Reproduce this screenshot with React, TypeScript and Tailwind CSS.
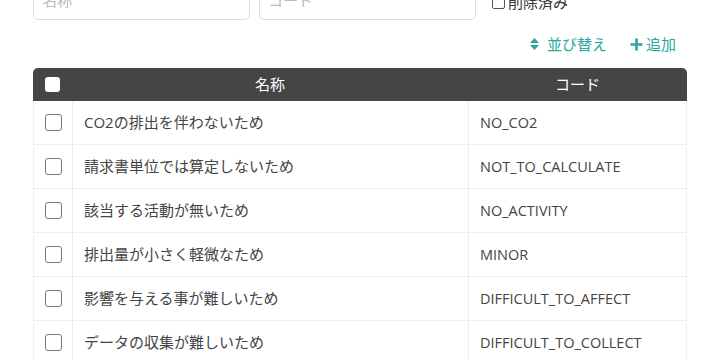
import React from "react";

const rows = [
  ["CO2の排出を伴わないため", "NO_CO2"],
  ["請求書単位では算定しないため", "NOT_TO_CALCULATE"],
  ["該当する活動が無いため", "NO_ACTIVITY"],
  ["排出量が小さく軽微なため", "MINOR"],
  ["影響を与える事が難しいため", "DIFFICULT_TO_AFFECT"],
  ["データの収集が難しいため", "DIFFICULT_TO_COLLECT"],
  ["その他", "OTHER"],
];

export default function App() {
  return (
    <div
      className="w-[720px] h-[360px] overflow-hidden bg-white text-[#444]"
      style={{ fontFamily: '"Open Sans", "Noto Sans CJK JP", sans-serif' }}
    >
      <div className="mt-[-19px] px-[33px]">
        <div className="flex items-start gap-[9px]">
          <div className="w-[217px] h-[39px] border border-[#dcdcdc] rounded-[5px] px-[8px] flex items-center text-[15px] text-[#bbb]">
            名称
          </div>
          <div className="w-[217px] h-[39px] border border-[#dcdcdc] rounded-[5px] px-[8px] flex items-center text-[15px] text-[#bbb]">
            コード
          </div>
          <label className="ml-[7px] mt-[10px] flex items-center gap-[3px] text-[15px] text-[#333]">
            <span className="w-[13px] h-[13px] border border-[#555] rounded-[2px] bg-white" />
            <span>削除済み</span>
          </label>
        </div>
        <div className="flex justify-end items-center gap-[23px] h-[30px] mt-[9px] pr-[11px] text-[15px] text-[#2aa89c]">
          <div className="flex items-center gap-[8px]">
            <svg width="9" height="12" viewBox="0 0 9 12">
              <path d="M4.5 0 L9 5 H0 Z" fill="#2aa89c" />
              <path d="M0 7 H9 L4.5 12 Z" fill="#2aa89c" />
            </svg>
            <span>並び替え</span>
          </div>
          <div className="flex items-center gap-[3px]">
            <svg width="13" height="13" viewBox="0 0 13 13">
              <path d="M6.5 0.5 V12.5 M0.5 6.5 H12.5" stroke="#2aa89c" strokeWidth="2.6" />
            </svg>
            <span>追加</span>
          </div>
        </div>
        <div className="mt-[9px] w-[654px]">
          <div className="flex h-[33px] bg-[#454545] rounded-t-[5px] text-white text-[15px] items-center">
            <div className="w-[39px] flex justify-center">
              <span className="w-[15px] h-[15px] bg-white rounded-[3px]" />
            </div>
            <div className="w-[396px] text-center">名称</div>
            <div className="flex-1 text-center">コード</div>
          </div>
          {rows.map(([name, code]) => (
            <div
              key={code}
              className="flex h-[44px] border-b border-x border-[#eee] text-[15px] text-[#444]"
            >
              <div className="w-[39px] flex items-center justify-center border-r border-[#eee]">
                <span className="w-[17px] h-[17px] border border-[#777] rounded-[3px] bg-white" />
              </div>
              <div className="w-[396px] flex items-center px-[11px] border-r border-[#eee]">
                {name}
              </div>
              <div className="flex-1 flex items-center px-[11px] text-[14.5px]">{code}</div>
            </div>
          ))}
        </div>
      </div>
    </div>
  );
}
